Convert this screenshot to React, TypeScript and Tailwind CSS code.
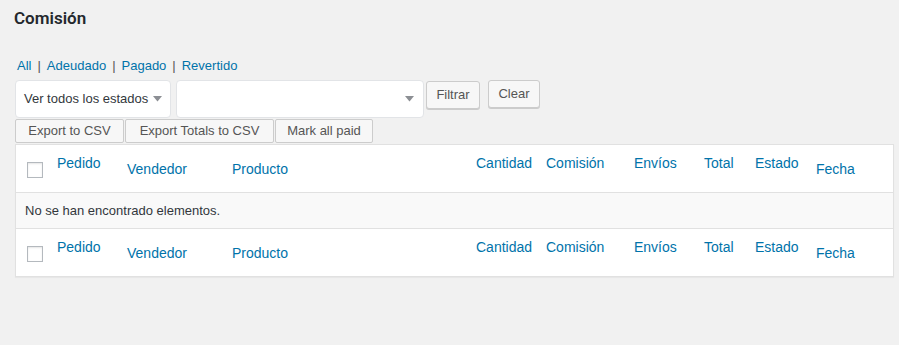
import React from 'react'

const columns = [
  { label: 'Pedido', low: false },
  { label: 'Vendedor', low: true },
  { label: 'Producto', low: true },
  { label: 'Cantidad', low: false },
  { label: 'Comisión', low: false },
  { label: 'Envíos', low: false },
  { label: 'Total', low: false },
  { label: 'Estado', low: false },
  { label: 'Fecha', low: true },
]

const views = ['All', 'Adeudado', 'Pagado', 'Revertido']

function Caret() {
  return (
    <svg width="9" height="6" viewBox="0 0 9 6" className="shrink-0">
      <path d="M0 0h9L4.5 5.5z" fill="#8c8f94" />
    </svg>
  )
}

function HeaderRow({ footer }: { footer?: boolean }) {
  return (
    <div
      className={`grid grid-cols-[41px_70px_105px_244px_70px_88px_70px_51px_61px_1fr] items-start text-[14px] leading-[20px] ${
        footer ? 'h-[47px]' : 'h-[48px] border-b border-[#e1e1e1]'
      }`}
    >
      <div className="pl-[11px] pt-[17px]">
        <div className="h-4 w-4 border border-[#b4b9be] bg-white shadow-[inset_0_1px_2px_rgba(0,0,0,0.1)]" />
      </div>
      {columns.map((col) => (
        <a
          key={col.label}
          className={`text-[#0073aa] whitespace-nowrap ${col.low ? 'pt-[14px]' : 'pt-[8px]'}`}
        >
          {col.label}
        </a>
      ))}
    </div>
  )
}

export default function App() {
  return (
    <div
      className="min-h-[345px] bg-[#f1f1f1] pl-[14px] pr-[5px] text-[13px] text-[#32373c]"
      style={{ fontFamily: '"Liberation Sans", Arial, sans-serif' }}
    >
      <h1
        className="pt-[6px] text-[17px] font-semibold leading-[24px] text-[#23282d]"
        style={{ fontFamily: 'Roboto, "Liberation Sans", sans-serif' }}
      >
        Comisión
      </h1>

      {/* status views */}
      <ul className="mt-[26px] flex items-center pl-[3px] leading-[20px] text-[#555]">
        {views.map((v, i) => (
          <li key={v} className="flex items-center">
            <a className="text-[#0073aa]">{v}</a>
            {i < views.length - 1 && <span className="px-[6px]">|</span>}
          </li>
        ))}
      </ul>

      {/* filters */}
      <div className="mt-[4px] flex items-start pl-[1px]">
        <div className="flex h-[38px] w-[156px] items-center justify-between rounded-[4px] border border-[#e2e4e7] bg-white pl-[8px] pr-[8px]">
          <span>Ver todos los estados</span>
          <Caret />
        </div>
        <div className="ml-[5px] flex h-[38px] w-[248px] items-center justify-end rounded-[4px] border border-[#e2e4e7] bg-white pr-[9px]">
          <Caret />
        </div>
        <button className="ml-[2px] mt-[1px] h-[28px] w-[54px] rounded-[3px] border border-[#ccc] bg-[#f7f7f7] text-[#555] shadow-[0_1px_0_#ccc]">
          Filtrar
        </button>
        <button className="ml-[8px] h-[28px] w-[52px] rounded-[3px] border border-[#ccc] bg-[#f7f7f7] text-[#555] shadow-[0_1px_0_#ccc]">
          Clear
        </button>
      </div>

      {/* export actions */}
      <div className="mt-[1px] flex gap-[1px] pl-[1px]">
        <button className="h-[24px] w-[109px] rounded-[2px] border border-[#ccc] bg-[#f7f7f7] text-[#555]">
          Export to CSV
        </button>
        <button className="h-[24px] w-[149px] rounded-[2px] border border-[#ccc] bg-[#f7f7f7] text-[#555]">
          Export Totals to CSV
        </button>
        <button className="h-[24px] w-[98px] rounded-[2px] border border-[#ccc] bg-[#f7f7f7] text-[#555]">
          Mark all paid
        </button>
      </div>

      {/* list table */}
      <div className="mt-[1px] ml-[1px] mr-0 w-[879px] border border-[#e1e1e1] bg-white shadow-[0_1px_1px_rgba(0,0,0,0.04)]">
        <HeaderRow />
        <div className="flex h-[36px] items-center border-b border-[#e1e1e1] bg-[#f9f9f9] pl-[9px]">
          No se han encontrado elementos.
        </div>
        <HeaderRow footer />
      </div>
    </div>
  )
}
